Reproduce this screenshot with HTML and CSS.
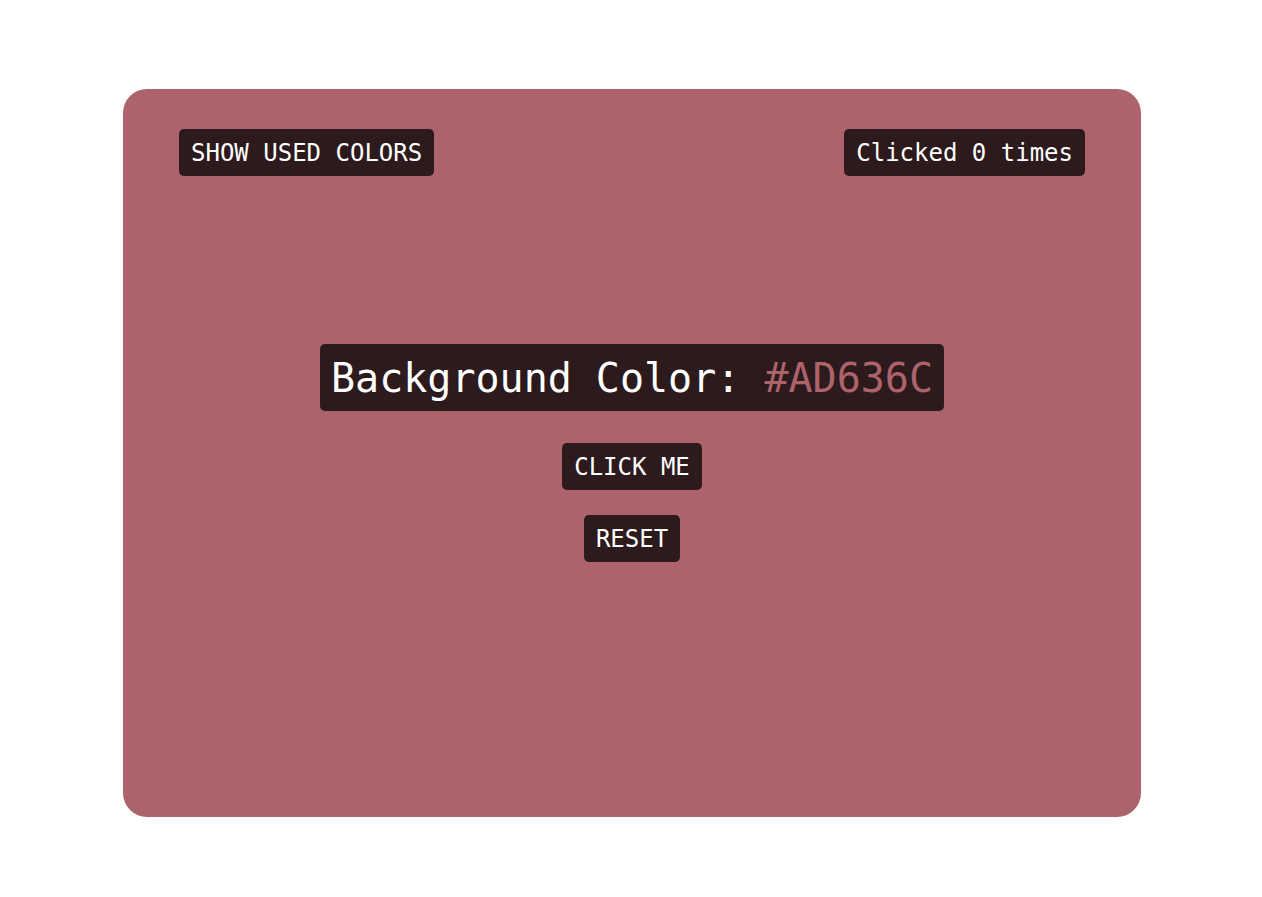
FILE: index.html
```html
<!DOCTYPE html>
<html lang="en">
<head>
<meta charset="utf-8">
<title>Background Color</title>
<link rel="stylesheet" href="styles.css">
</head>
<body>
  <main class="card">
    <div class="top-row">
      <button class="chip">SHOW USED COLORS</button>
      <span class="chip">Clicked 0 times</span>
    </div>
    <div class="center">
      <h1 class="title">Background Color: <span class="hex">#AD636C</span></h1>
      <button class="chip btn-click">CLICK ME</button>
      <button class="chip btn-reset">RESET</button>
    </div>
  </main>
</body>
</html>
```

FILE: styles.css
```css
html, body {
  margin: 0;
  padding: 0;
  background: #ffffff;
}

body {
  font-family: "DejaVu Sans Mono", "Liberation Mono", monospace;
  padding-top: 89px;
}

.card {
  width: 1018px;
  height: 728px;
  margin-left: calc(50% - 508px);
  background: #ad636c;
  border-radius: 24px;
  display: grid;
  box-sizing: border-box;
  padding: 40px 56px;
}

.top-row {
  grid-area: 1 / 1;
  align-self: start;
  display: flex;
  justify-content: space-between;
}

.center {
  grid-area: 1 / 1;
  align-self: center;
  display: flex;
  flex-direction: column;
  align-items: center;
}

.chip {
  font-family: inherit;
  font-size: 24px;
  line-height: 29px;
  padding: 10px 12px 8px;
  background: #2c1a1d;
  color: #ffffff;
  border: none;
  border-radius: 5px;
  margin: 0;
  display: inline-block;
}

.title {
  margin: 0;
  font-size: 40px;
  font-weight: normal;
  line-height: 47px;
  padding: 11px 11px 9px;
  background: #2c1a1d;
  color: #ffffff;
  border-radius: 5px;
}

.hex {
  color: #ad636c;
}

.btn-click {
  margin-top: 32px;
}

.btn-reset {
  margin-top: 25px;
}
```
